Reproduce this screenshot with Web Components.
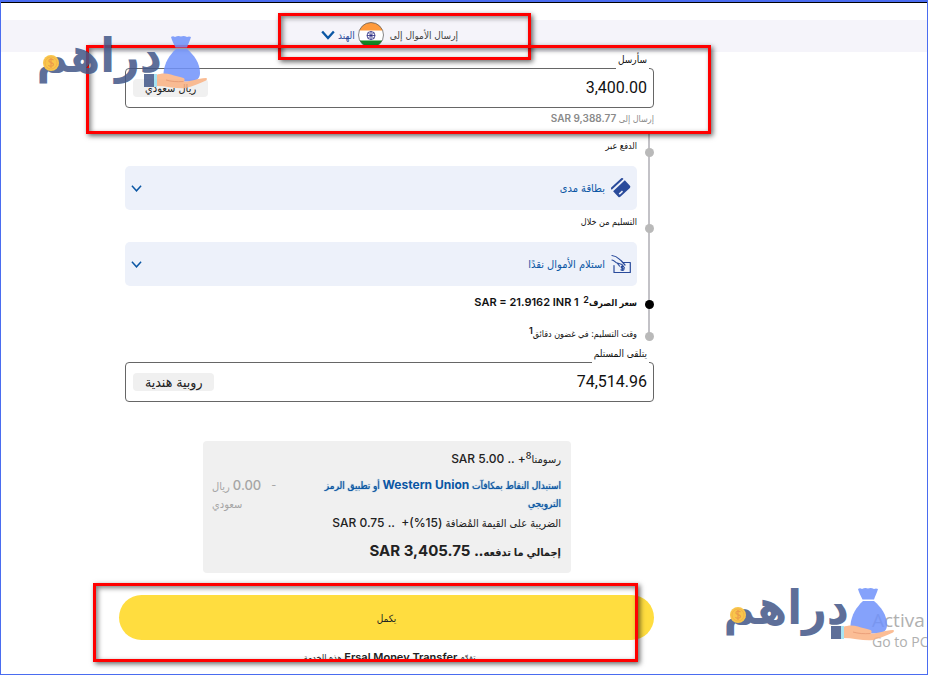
<!DOCTYPE html>
<html lang="ar" dir="rtl">
<head>
<meta charset="utf-8">
<meta name="viewport" content="width=device-width, initial-scale=1">
<title>إرسال الأموال</title>
<style>
    * { box-sizing: border-box; }

    body {
        --ink: #222;
        --blue: #0b57a4;
        --navy: #2a4b9b;
        --grey: #8a8a8a;
        --line: #c3c2c7;
        --soft: #edf1fa;
        --panel: #f0f0f0;
        --yellow: #ffdd3f;
        margin: 0;
        background: #fff;
        color: var(--ink);
        font-family: Inter, "DejaVu Sans Condensed", "DejaVu Sans", sans-serif;
        font-size: 10px;
    }
</style>
</head>
<body>
<transfer-page>
    <country-bar slot="header" country="الهند">إرسال الأموال إلى</country-bar>

    <money-field label="سأرسل" value="3,400.00" currency="ريال سعودي">إرسال إلى <b>SAR 9,388.77</b></money-field>

    <step-list>
        <step-item>
            الدفع عبر
            <option-select slot="control" label="الدفع عبر" value="بطاقة مدى" icon="card"></option-select>
        </step-item>
        <step-item>
            التسليم من خلال
            <option-select slot="control" label="التسليم من خلال" value="استلام الأموال نقدًا" icon="cash"></option-select>
        </step-item>
        <step-item active>سعر الصرف<sup>2</sup> &nbsp;<b>1 SAR = 21.9162 INR</b></step-item>
        <step-item compact>وقت التسليم: في غضون دقائق<sup>1</sup></step-item>
    </step-list>

    <money-field large label="يتلقى المستلم" value="74,514.96" currency="روبية هندية"></money-field>

    <fee-summary></fee-summary>
    <submit-button>يكمل</submit-button>
    <service-note>تقدّم <b>Ersal Money Transfer</b> هذه الخدمة</service-note>

    <activation-note slot="overlay"></activation-note>
    <mark-box slot="overlay" style="left:278px;top:13px;width:253px;height:47px"></mark-box>
    <mark-box slot="overlay" style="left:86px;top:45px;width:625px;height:89px"></mark-box>
    <mark-box slot="overlay" style="left:93px;top:583px;width:545px;height:79px"></mark-box>
    <brand-mark slot="overlay" style="left:36px;top:34px"></brand-mark>
    <brand-mark slot="overlay" style="left:723px;top:586px"></brand-mark>
</transfer-page>

<script>
const reset = '*, ::before, ::after { box-sizing: border-box; }';

function define(name, render) {
    customElements.define(name, class extends HTMLElement {
        constructor() {
            super();
            this.attachShadow({mode: 'open'});
        }

        connectedCallback() {
            const template = document.createElement('template');
            template.innerHTML = `<style>${reset}</style>` + render(this);
            this.shadowRoot.replaceChildren(template.content.cloneNode(true));
        }
    });
}

const chevron = (size, width) => `
    <svg class="chevron" width="${size}" height="${size}" viewBox="0 0 12 12" fill="none" stroke="#0b57a4" stroke-width="${width}" aria-hidden="true">
        <path d="M1 3 6 8.500l5-5.500"/>
    </svg>`;

const icons = {
    card: `
        <svg width="20" height="20" viewBox="0 0 20 20" aria-hidden="true">
            <g transform="rotate(-43 10 10)" fill="#2a4b9b">
                <path d="M2 4.500q0-1.500 1.500-1.500h13q1.500 0 1.500 1.500v.5H2z"/>
                <path d="M2 7h16v7.500q0 1.500-1.500 1.500h-13q-1.500 0-1.500-1.500z"/>
                <path d="M4.500 13.300h4.500" stroke="#edf1fa" stroke-width="1.500"/>
            </g>
        </svg>`,
    cash: `
        <svg width="20" height="20" viewBox="0 0 20 20" fill="none" stroke="#2a4b9b" stroke-width="1.200" stroke-linecap="round" stroke-linejoin="round" aria-hidden="true">
            <path d="M12 8.500h7.300v10H3V11.500"/>
            <path d="M1 1.500C6 2 8 5 10 6.500l4 4.500M1 6c2 .2 3 2 4.500 2.800L11 10.500l2.500 3.500M6.500 9.500l2 2.500"/>
            <path d="M12.500 12.500c-1.800-.8-3 .2-2 1.300s2.800.5 2.300 1.900c-.5 1-2.200.7-2.900.1M11.300 11.500v5"/>
        </svg>`
};

define('transfer-page', () => `
    <style>
        :host {
            display: block;
            position: relative;
            min-height: 100vh;
            overflow: hidden;
            border: 1px solid #4a6cf0;
            border-top-width: 2px;
        }
        header { border-top: 1px solid #000; padding-top: 17px; }
        main { padding: 0 273px 0 124px; }
    </style>
    <header><slot name="header"></slot></header>
    <main><slot></slot></main>
    <slot name="overlay"></slot>
`);

define('country-bar', el => `
    <style>
        :host { display: block; background: #f5f4fa; padding: 0 273px 0 124px; }
        div { display: flex; align-items: center; justify-content: center; gap: 6px; height: 32px; padding-bottom: 3px; color: #444; font-size: 10px; }
        button { display: flex; align-items: center; gap: 3px; padding: 0; border: 0; background: none; color: var(--navy); font: inherit; }
    </style>
    <div>
        <slot></slot>
        <button type="button">
            <svg width="26" height="26" viewBox="0 0 26 26" aria-hidden="true">
                <clipPath id="round"><circle cx="13" cy="13" r="12.500"/></clipPath>
                <g clip-path="url(#round)">
                    <path fill="#fff" d="M0 0h26v26H0z"/>
                    <path fill="#ff9a3c" d="M0 0h26v8.500H0z"/>
                    <path fill="#138a25" d="M0 18.500h26V26H0z"/>
                </g>
                <circle cx="13" cy="13" r="12.500" fill="none" stroke="#555" stroke-width=".7"/>
                <g fill="none" stroke="#25257e" stroke-width=".8">
                    <circle cx="13" cy="13.500" r="4"/>
                    <path d="M9 13.500h8M13 9.500v8M10.200 10.700l5.600 5.600M15.800 10.700l-5.600 5.600"/>
                </g>
            </svg>
            ${el.getAttribute('country')}
            ${chevron(14, 2)}
        </button>
    </div>
`);

define('money-field', el => `
    <style>
        :host { display: block; --chip-size: 11px; }
        :host([large]) { --chip-size: 14px; }
        label { display: block; position: relative; width: fit-content; height: 18px; margin: 0 5px -2px 0; padding: 0 2px; background: #fff; color: #111; font-size: 10px; line-height: 15px; }
        .box { display: flex; align-items: center; height: 40px; padding: 0 6px 0 7px; border: 1px solid #666; border-radius: 4px; }
        input { flex: 1; min-width: 0; padding: 0 0 2px; border: 0; outline: 0; background: none; color: #111; font: 16px Roboto, sans-serif; direction: ltr; text-align: right; }
        .chip { padding: 0 12px; border-radius: 4px; background: var(--panel); color: #222; font-size: var(--chip-size); line-height: 18px; }
        .hint { height: 22px; color: var(--grey); font-size: 9px; line-height: 20px; }
        ::slotted(b) { font-size: 10px; font-weight: 600; }
    </style>
    <label for="amount">${el.getAttribute('label')}</label>
    <div class="box">
        <input id="amount" type="text" inputmode="decimal" value="${el.getAttribute('value')}">
        <span class="chip">${el.getAttribute('currency')}</span>
    </div>
    ${el.textContent.trim() ? '<div class="hint"><slot></slot></div>' : ''}
`);

define('step-list', () => `
    <style>
        :host { display: block; position: relative; margin-top: 8px; padding-right: 17px; }
        :host::before { content: ""; position: absolute; top: -4px; bottom: 10px; right: 4px; width: 2px; background: var(--line); }
    </style>
    <slot></slot>
`);

define('step-item', () => `
    <style>
        :host { display: block; position: relative; height: 76px; color: #111; font-size: 9px; line-height: 16px; }
        :host::before { content: ""; position: absolute; top: 10px; right: -17px; width: 9px; height: 9px; border-radius: 50%; background: #b9b9b9; }
        :host([active])::before { background: #000; }
        :host([active]) { height: 32px; line-height: 24px; }
        :host([compact]) { height: 24px; line-height: 24px; }
        .title { height: 16px; margin-bottom: 12px; }
        ::slotted(b) { font-size: 11px; font-weight: 600; text-shadow: none; }
        ::slotted(sup) { font-size: 9px; font-weight: 600; line-height: 0; vertical-align: 3px; }
        :host([active]) .title { font-size: 9px; font-weight: 600; }
    </style>
    <div class="title"><slot></slot></div>
    <slot name="control"></slot>
`);

define('option-select', el => `
    <style>
        :host { display: grid; align-items: center; height: 44px; }
        select, .icon, .chevron { grid-area: 1 / 1; }
        select { width: 100%; height: 44px; padding: 0 32px; border: 0; border-radius: 5px; appearance: none; background: var(--soft); color: var(--blue); font: inherit; font-size: 11px; }
        .icon, .chevron { pointer-events: none; }
        .icon { display: flex; justify-self: start; margin-right: 6px; }
        .chevron { justify-self: end; margin-left: 6px; }
    </style>
    <select aria-label="${el.getAttribute('label')}"><option>${el.getAttribute('value')}</option></select>
    <span class="icon">${icons[el.getAttribute('icon')]}</span>
    ${chevron(11, 1.6)}
`);

define('fee-summary', () => `
    <style>
        :host { display: block; margin: 39px 83px 0 78px; padding: 9px 10px 11px 9px; border-radius: 4px; background: var(--panel); font-size: 11px; line-height: 18px; }
        .row { display: flex; justify-content: space-between; margin-top: 8px; }
        p { height: 18px; margin: 0; }
        b { font-size: 12px; font-weight: 500; }
        sup { font-size: 9px; font-weight: 500; line-height: 0; vertical-align: 4px; }
        a { height: 38px; color: var(--blue); font-size: 10px; font-weight: 500; text-decoration: none; text-shadow: 0 0 1px currentColor; white-space: nowrap; }
        a b { font-size: 12px; font-weight: 700; text-shadow: none; }
        .off { display: flex; gap: 10px; height: 36px; color: #a5a5a5; }
        .off span:last-child { text-align: left; white-space: nowrap; }
        .off b { font-size: 13px; }
        .total { height: 22px; margin-top: 8px; font-weight: 600; line-height: 22px; }
        .total b { font-size: 15px; font-weight: 700; }
    </style>
    <p>رسومنا<sup>8</sup><b>+ .. SAR 5.00</b></p>
    <div class="row">
        <a href="#">استبدال النقاط بمكافآت <b>Western Union</b> أو تطبيق الرمز<br>الترويجي</a>
        <div class="off"><span>-</span><span><b>0.00</b> ريال<br>سعودي</span></div>
    </div>
    <p>الضريبة على القيمة المُضافة <b>(15%)+ &nbsp;.. SAR 0.75</b></p>
    <p class="total">إجمالي ما تدفعه<b>.. SAR 3,405.75</b></p>
`);

define('submit-button', () => `
    <style>
        :host { display: block; margin: 22px 0 0 -6px; }
        button { display: block; width: 100%; height: 45px; border: 0; border-radius: 23px; background: var(--yellow); color: var(--ink); font: inherit; font-size: 10px; }
    </style>
    <button type="submit"><slot></slot></button>
`);

define('service-note', () => `
    <style>
        :host { display: block; height: 12px; margin-top: 8px; overflow: hidden; font-size: 9px; line-height: 18px; text-align: center; }
        ::slotted(b) { font-size: 11px; font-weight: 600; }
    </style>
    <slot></slot>
`);

define('activation-note', () => `
    <style>
        :host { display: block; position: absolute; left: 871px; top: 606px; direction: ltr; white-space: nowrap; color: #b0b0b0; font-family: "Open Sans", sans-serif; }
        div { font-size: 19px; line-height: 24px; }
        small { display: block; font-size: 14px; line-height: 20px; }
    </style>
    <div>Activa</div>
    <small>Go to PC</small>
`);

define('mark-box', () => `
    <style>
        :host { position: absolute; margin: -2px 0 0 -1px; border: 3px solid #f00; box-shadow: 2px 2px 5px rgba(0, 0, 0, .6), inset 2px 2px 5px rgba(0, 0, 0, .5); pointer-events: none; }
    </style>
`);

define('brand-mark', () => `
    <style>
        :host { position: absolute; margin: -2px 0 0 -1px; opacity: .85; pointer-events: none; }
        svg { display: block; overflow: visible; }
        text { font: 700 48px "DejaVu Sans Condensed", "DejaVu Sans", sans-serif; fill: #425788; }
    </style>
    <svg width="172" height="56" viewBox="0 0 172 56" role="img">
        <text x="126" y="38">دراهم</text>
        <circle cx="15" cy="29" r="8" fill="#f8bd2c"/>
        <circle cx="15" cy="29" r="6" fill="none" stroke="#f2a52b"/>
        <path d="M17.500 26c-2-1.500-5-.8-4.600 1.200.4 1.800 4.600 1.200 4.600 3.400 0 2-3.500 2.200-5.200.8M15 24v10" fill="none" stroke="#e98b2b" stroke-width="1.200"/>
        <path fill="#7092fb" d="M135 3q2-1.500 4 0 3-1.500 6-.5 3-1 6 .5 2-1.200 4 0c-1 4-3 7-4 10.500h-11.500C138 10 136 7 135 3z"/>
        <path fill="#7092fb" d="M140 15h11c7 6 13 14 13 24 0 6-4 8.500-10 8.500h-17c-6 0-10-2-9.500-8.500.8-10 6-18 12.500-24z"/>
        <path fill="#fbb283" d="M120 41c5-2 10-2 15-.5 4 1.500 8 2 12.500 3.500 1.500.8 1.500 3 0 3.500 7 .5 13-3 22.500-3.500 1.500.3 1 1.800 0 2.500-7 3-13 6-20 7.500-8 1.200-19-2-30-2z"/>
        <path d="M130 46c5 1.500 11 2 17.500 1.500" fill="none" stroke="#e89064" stroke-width="1"/>
        <path fill="#425788" d="M108 40h10v13h-10z"/>
        <path fill="#98e0f2" d="M118 40h3v13h-3z"/>
    </svg>
`);
</script>
</body>
</html>
